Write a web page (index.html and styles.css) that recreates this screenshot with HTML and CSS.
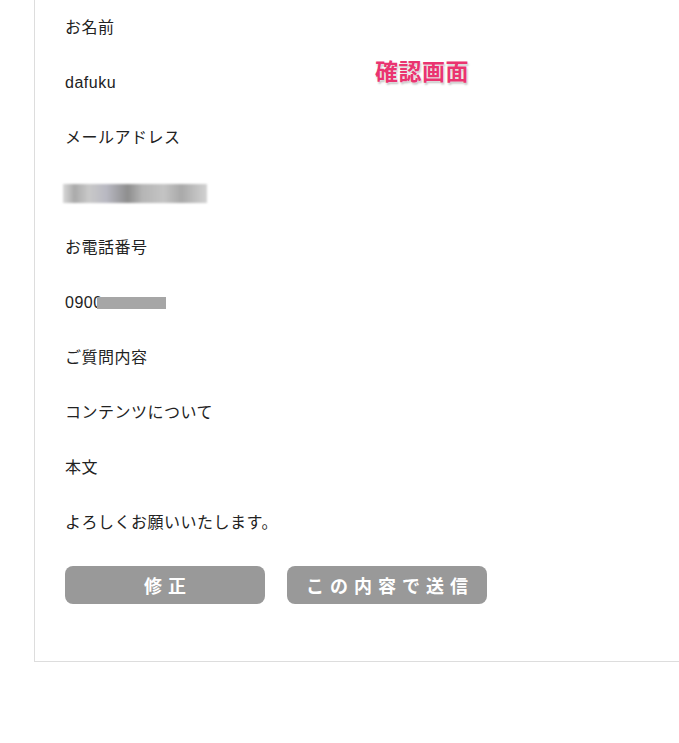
FILE: index.html
```html
<!DOCTYPE html>
<html lang="ja">
<head>
    <meta charset="UTF-8">
    <title>お問い合わせ 確認画面</title>
    <link rel="stylesheet" href="styles.css">
</head>
<body>
    <div class="confirm-box">
        <span class="stamp">確認画面</span>

        <div class="row">お名前</div>
        <div class="row">dafuku</div>
        <div class="row">メールアドレス</div>
        <div class="row"><span class="blur blur-mail"></span></div>
        <div class="row">お電話番号</div>
        <div class="row">0900<span class="blur blur-tel"></span></div>
        <div class="row">ご質問内容</div>
        <div class="row">コンテンツについて</div>
        <div class="row">本文</div>
        <div class="row">よろしくお願いいたします。</div>

        <div class="actions">
            <button type="button" class="btn">修正</button>
            <button type="button" class="btn">この内容で送信</button>
        </div>
    </div>
</body>
</html>
```

FILE: styles.css
```css
body {
    margin: 0;
    background: #fff;
    color: #222;
    font-family: "Liberation Sans", "Noto Sans CJK JP", sans-serif;
    font-size: 16px;
    overflow: hidden;
}
.confirm-box {
    position: relative;
    margin-left: 34px;
    width: 700px;
    padding: 0 0 57px 30px;
    border-left: 1px solid #ddd;
    border-bottom: 1px solid #ddd;
}
.row {
    height: 55px;
    line-height: 55px;
    letter-spacing: 0.5px;
    white-space: nowrap;
}
.stamp {
    position: absolute;
    left: 340px;
    top: 53px;
    color: #ea3470;
    font-family: "Noto Sans CJK JP", sans-serif;
    font-size: 23px;
    font-weight: bold;
    letter-spacing: 0.5px;
    text-shadow: 0 0 2px #fff, 1px 2px 2px rgba(0, 0, 0, 0.25);
}
.blur {
    display: inline-block;
    vertical-align: middle;
}
.blur-mail {
    width: 144px;
    height: 19px;
    margin-left: -2px;
    background: linear-gradient(90deg, #d8d8d8 0, #aaa 8%, #c9c9c9 18%, #b9b9c2 30%, #8e8e8e 45%, #b5b5b5 55%, #c4c4c4 70%, #a9a9a9 82%, #d2d2d2 100%);
    filter: blur(1px);
}
.blur-tel {
    width: 69px;
    height: 12px;
    margin-top: -2px;
    margin-left: -6px;
    background: #a6a6a6;
    filter: blur(0.5px);
}
.actions {
    display: flex;
    gap: 22px;
    margin-top: 16px;
}
.btn {
    width: 200px;
    height: 38px;
    border: none;
    border-radius: 8px;
    background: #999;
    color: #fff;
    font-family: "Noto Sans CJK JP", sans-serif;
    font-size: 18px;
    font-weight: bold;
    letter-spacing: 6px;
    padding: 0 0 0 6px;
}
```
